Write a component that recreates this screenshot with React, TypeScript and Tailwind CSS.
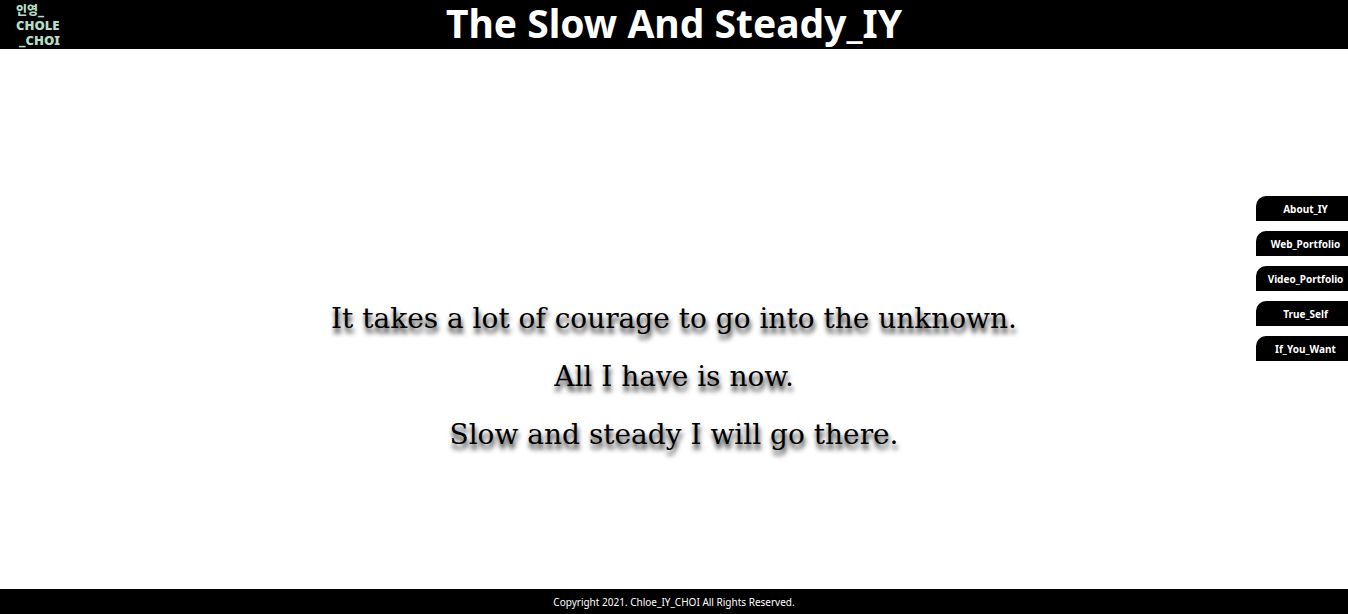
const links = [
  { label: 'About_IY', href: '#about' },
  { label: 'Web_Portfolio', href: '#web' },
  { label: 'Video_Portfolio', href: '#video' },
  { label: 'True_Self', href: '#self' },
  { label: 'If_You_Want', href: '#contact' },
];

const lines = [
  'It takes a lot of courage to go into the unknown.',
  'All I have is now.',
  'Slow and steady I will go there.',
];

function Logo() {
  return (
    <a
      href="#home"
      className="flex w-11 flex-col pt-[2px] font-['Noto_Sans','Noto_Sans_CJK_KR',sans-serif] text-[13px] leading-[15px] font-black text-[#b5dcc8]"
    >
      <span className="text-[12px] leading-[15px]">인영_</span>
      <span>CHOLE</span>
      <span className="text-right">_CHOI</span>
    </a>
  );
}

export default function App() {
  return (
    <div className="flex min-h-screen flex-col bg-white font-['Noto_Sans','Noto_Sans_CJK_KR',sans-serif]">
      <header className="grid grid-cols-[1fr_auto_1fr] items-center bg-black px-4 text-white">
        <Logo />
        <h1 className="pb-1 text-[39px] leading-[45px] font-bold">The Slow And Steady_IY</h1>
      </header>
      <div className="grid flex-1 grid-cols-[92px_1fr_92px]">
        <main className="col-start-2 flex flex-col items-center pt-[241px] font-['DejaVu_Serif',serif] text-[28px] leading-[58px] text-black [text-shadow:1px_5px_5px_rgba(0,0,0,0.9)]">
          {lines.map((line) => (
            <p key={line}>{line}</p>
          ))}
        </main>
        <nav className="flex flex-col gap-[10px] pt-[147px]" aria-label="Main">
          {links.map(({ label, href }) => (
            <a
              key={label}
              href={href}
              className="rounded-tl-[10px] bg-black pt-px pl-[7px] text-center text-[10px] leading-6 font-bold text-white"
            >
              {label}
            </a>
          ))}
        </nav>
      </div>
      <footer className="bg-black pt-px text-center text-[10px] leading-6 text-white">
        Copyright 2021. Chloe_IY_CHOI All Rights Reserved.
      </footer>
    </div>
  );
}
